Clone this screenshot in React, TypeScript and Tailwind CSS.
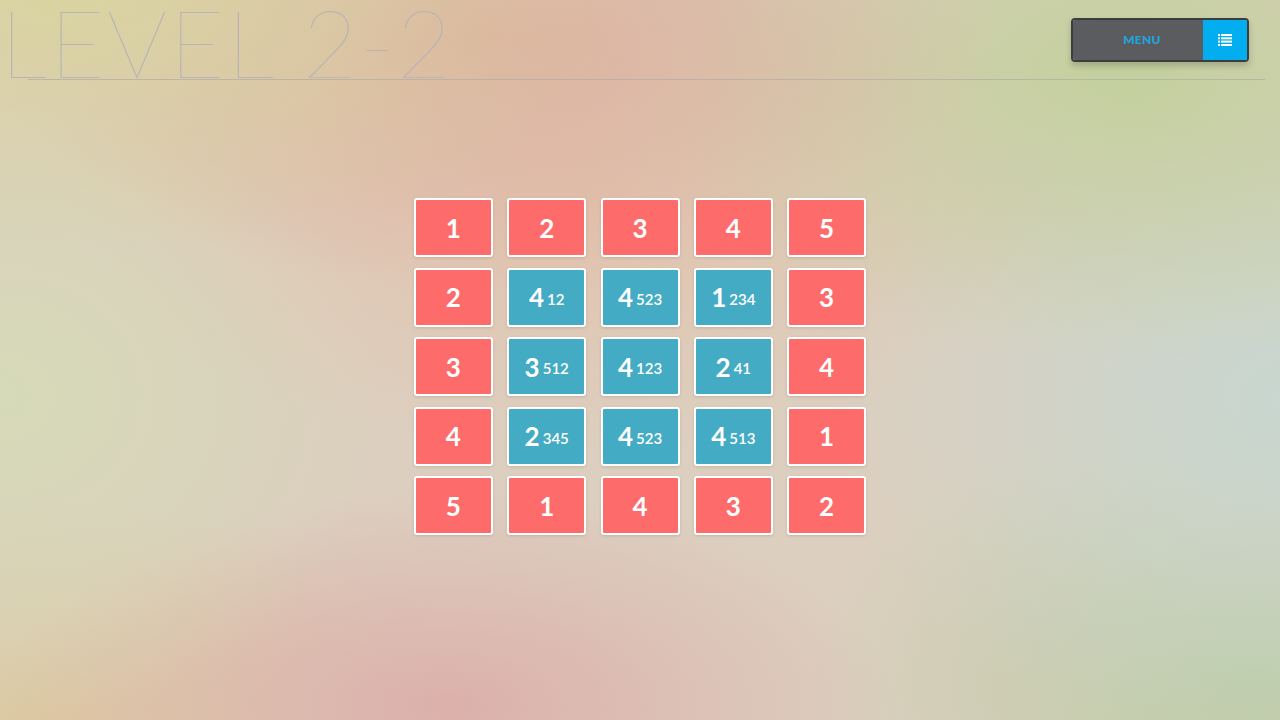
import React from "react";

type Cell = { v: string; s?: string };

const rows: Cell[][] = [
  [{ v: "1" }, { v: "2" }, { v: "3" }, { v: "4" }, { v: "5" }],
  [{ v: "2" }, { v: "4", s: "12" }, { v: "4", s: "523" }, { v: "1", s: "234" }, { v: "3" }],
  [{ v: "3" }, { v: "3", s: "512" }, { v: "4", s: "123" }, { v: "2", s: "41" }, { v: "4" }],
  [{ v: "4" }, { v: "2", s: "345" }, { v: "4", s: "523" }, { v: "4", s: "513" }, { v: "1" }],
  [{ v: "5" }, { v: "1" }, { v: "4" }, { v: "3" }, { v: "2" }],
];

function Tile({ c }: { c: Cell }) {
  const blue = !!c.s;
  return (
    <div
      className={`w-[79px] h-[59px] rounded-[3px] border-[2.5px] border-white shadow-[0_1px_3px_rgba(0,0,0,0.12)] flex items-center justify-center text-white ${
        blue ? "bg-[#44abc4]" : "bg-[#fe6b6b]"
      }`}
    >
      <span className="text-[26px] font-bold leading-none">{c.v}</span>
      {c.s && <span className="text-[15px] font-semibold leading-none ml-[3px] mt-[4px]">{c.s}</span>}
    </div>
  );
}

export default function App() {
  return (
    <div
      className="relative w-full h-[720px] overflow-hidden bg-[#dccfbf] bg-[radial-gradient(ellipse_45%_35%_at_5%_0%,#d9d3a0_0%,transparent_100%),radial-gradient(ellipse_40%_35%_at_38%_5%,#dcb09e_0%,transparent_100%),radial-gradient(ellipse_40%_40%_at_88%_10%,#c3d09d_0%,transparent_100%),radial-gradient(ellipse_35%_50%_at_100%_55%,#c8d7d0_0%,transparent_100%),radial-gradient(ellipse_30%_45%_at_0%_55%,#d6dab8_0%,transparent_100%),radial-gradient(ellipse_35%_30%_at_35%_98%,#dcb0ac_0%,transparent_100%),radial-gradient(ellipse_35%_40%_at_98%_95%,#bccca6_0%,transparent_100%),radial-gradient(ellipse_35%_30%_at_5%_100%,#dcc9a0_0%,transparent_100%),radial-gradient(ellipse_40%_35%_at_45%_28%,#e2c3ae_0%,transparent_100%)]"
      style={{ fontFamily: "Lato, 'Noto Sans', sans-serif" }}
    >
      <header className="flex items-start justify-between h-[79px]">
        <h1
          className="text-[95px] leading-[82px] tracking-[2px] text-[#b2afb8]/85 whitespace-nowrap"
          style={{ fontWeight: 100 }}
        >
          LEVEL 2-2
        </h1>
        <button className="mt-[18px] mr-[31px] w-[178px] h-[44px] flex rounded-[4px] border-2 border-[#3c3d40] overflow-hidden shadow-[0_4px_6px_rgba(0,0,0,0.18)]">
          <span className="flex-1 h-full bg-[#5b5c60] flex items-center justify-center pl-[8px] text-[12px] font-black tracking-[0.3px] text-[#1ea5df]">
            MENU
          </span>
          <span className="w-[44px] h-full bg-[#03aef0] flex items-center justify-center">
            <svg width="14" height="12" viewBox="0 0 14 12" fill="white">
              <rect x="0" y="0" width="2" height="2" />
              <rect x="3" y="0" width="11" height="2" />
              <rect x="0" y="3.3" width="2" height="2" />
              <rect x="3" y="3.3" width="11" height="2" />
              <rect x="0" y="6.6" width="2" height="2" />
              <rect x="3" y="6.6" width="11" height="2" />
              <rect x="0" y="10" width="2" height="2" />
              <rect x="3" y="10" width="11" height="2" />
            </svg>
          </span>
        </button>
      </header>
      <div className="h-px ml-[28px] mr-[15px] bg-[#b4aea6]/80" />
      <main className="flex justify-center mt-[118px]">
        <div className="grid grid-cols-[repeat(5,79px)] gap-x-[14.3px] gap-y-[10.5px]">
          {rows.flat().map((c, i) => (
            <Tile key={i} c={c} />
          ))}
        </div>
      </main>
    </div>
  );
}
